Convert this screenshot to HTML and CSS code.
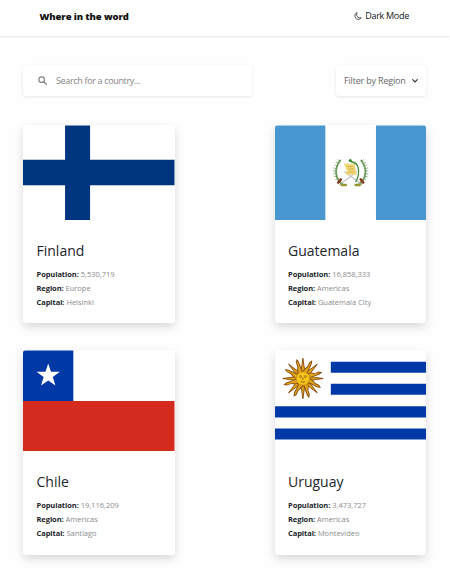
FILE: index.html
```html
<!DOCTYPE html>
<html lang="en">
<head>
<meta charset="utf-8">
<title>Where in the word</title>
<link rel="stylesheet" href="styles.css">
</head>
<body>
<header class="header">
  <h1 class="brand">Where in the word</h1>
  <div class="mode">
    <svg class="moon" viewBox="0 0 16 16"><path d="M6.2 1.2A7 7 0 1 0 14.6 11.500A7 7 0 0 1 6.200 1.200Z" fill="none" stroke="#222" stroke-width="1.500" stroke-linejoin="round"/></svg>
    <span>Dark Mode</span>
  </div>
</header>
<main class="main">
  <div class="controls">
    <div class="search">
      <svg class="glass" viewBox="0 0 16 16"><circle cx="6.500" cy="6.500" r="5" fill="none" stroke="#858585" stroke-width="2.200"/><path d="M10.300 10.300L14.800 14.800" stroke="#858585" stroke-width="2.600" stroke-linecap="round"/></svg>
      <span>Search for a country...</span>
    </div>
    <div class="filter">
      <span>Filter by Region</span>
      <svg class="chevron" viewBox="0 0 6 4"><path d="M.7.700L3 3L5.300.700" fill="none" stroke="#333" stroke-width="1.200" stroke-linecap="round"/></svg>
    </div>
  </div>
  <div class="grid">
    <article class="card">
      <svg class="flag" viewBox="0 0 152 95" preserveAspectRatio="none"><path fill="#fff" d="M0 0H152V95H0z"/><path fill="#003580" d="M42.200.500H67.300V95H42.200zM0 34.700H152V60.300H0z"/></svg>
      <div class="info">
        <h2 class="name">Finland</h2>
        <p><b>Population:</b> <span>5,530,719</span></p>
        <p><b>Region:</b> <span>Europe</span></p>
        <p><b>Capital:</b> <span>Helsinki</span></p>
      </div>
    </article>
    <article class="card">
      <svg class="flag" viewBox="0 0 152 95" preserveAspectRatio="none">
        <path fill="#fff" d="M0 0H152V95H0z"/><path fill="#4997d0" d="M0 .5H50.500V95H0zM101.300.500H152V95H101.300z"/>
        <g fill="none" stroke-linecap="round">
          <path d="M64.500 35.500C58 43 58.500 53.500 67.500 59.500M87.500 35.500C94 43 93.500 53.500 84.500 59.500" stroke="#6f9c62" stroke-width="3.800" stroke-dasharray=".6 2.200" stroke-linecap="butt"/>
          <path d="M65.500 35.500C59.500 43 59.500 53 68 59.500M86.500 35.500C92.500 43 92.500 53 84 59.500" stroke="#6c9a58" stroke-width="1.800"/>
          <path d="M67 58L82 47M85 58L70 47" stroke="#c3c5c7" stroke-width="1.300"/>
          <path d="M63.500 57.500L66 54.500M88.500 57.500L86 54.500" stroke="#873b22" stroke-width="2.600"/>
          <path d="M67 60h4M81 60h4" stroke="#96982f" stroke-width="2.600"/>
        </g>
        <path d="M69 38.500L80 39L82 50L71 49.500L72 45z" fill="#f1d675"/>
        <path d="M73 41.500h5M74 44h5M74 47h5" stroke="#c6a34b" stroke-width=".7"/>
        <path d="M76 36.500Q83 38 83.500 43Q85 50 81 57" fill="none" stroke="#448b36" stroke-width="1.300"/><circle cx="75.500" cy="35.500" r="1.500" fill="#31852e"/>
      </svg>
      <div class="info">
        <h2 class="name">Guatemala</h2>
        <p><b>Population:</b> <span>16,858,333</span></p>
        <p><b>Region:</b> <span>Americas</span></p>
        <p><b>Capital:</b> <span>Guatemala City</span></p>
      </div>
    </article>
    <article class="card">
      <svg class="flag tall" viewBox="0 0 152 101" preserveAspectRatio="none"><path fill="#fff" d="M0 0H152V101H0z"/><path fill="#0039a6" d="M0 .5H50.500V51H0z"/><path fill="#d52b1e" d="M0 50.900H152V101H0z"/><path fill="#fff" d="M25.300 13.500L28.100 21.700L37 21.800L29.900 27.100L32.500 35.500L25.300 30.500L18.100 35.500L20.700 27.100L13.600 21.800L22.500 21.700z"/></svg>
      <div class="info">
        <h2 class="name">Chile</h2>
        <p><b>Population:</b> <span>19,116,209</span></p>
        <p><b>Region:</b> <span>Americas</span></p>
        <p><b>Capital:</b> <span>Santiago</span></p>
      </div>
    </article>
    <article class="card">
      <svg class="flag tall" viewBox="0 0 152 101" preserveAspectRatio="none">
        <path fill="#fff" d="M0 0H152V101H0z"/><path fill="#0038a8" d="M56 11.700H152V22.700H56zM56 33.800H152V44.800H56zM0 56.200H152V67.500H0zM0 78.500H152V89.500H0z"/>
        <defs>
          <path id="ray" d="M-2.200-5L0-20.300L2.200-5z"/>
          <path id="wave" d="M-2.400-5C-4-9 1-12 0-15Q-.5-17 1.500-19.500C4-14 0-11 2.600-5z"/>
        </defs>
        <g transform="translate(28 28.500)">
          <g fill="#dfa51c" stroke="#84480d" stroke-width=".9">
            <use href="#ray"/><use href="#ray" transform="rotate(45)"/><use href="#ray" transform="rotate(90)"/><use href="#ray" transform="rotate(135)"/><use href="#ray" transform="rotate(180)"/><use href="#ray" transform="rotate(225)"/><use href="#ray" transform="rotate(270)"/><use href="#ray" transform="rotate(315)"/>
            <use href="#wave" transform="rotate(22.500)"/><use href="#wave" transform="rotate(67.500)"/><use href="#wave" transform="rotate(112.500)"/><use href="#wave" transform="rotate(157.500)"/><use href="#wave" transform="rotate(202.500)"/><use href="#wave" transform="rotate(247.500)"/><use href="#wave" transform="rotate(292.500)"/><use href="#wave" transform="rotate(337.500)"/>
          </g>
          <circle r="6.800" fill="#f5c51c" stroke="#b8790f" stroke-width=".6"/>
          <path d="M-4-2Q-2.500-3.500-1-2M1-2Q2.500-3.500 4-2M-3-1h1.500M1.500-1h1.500M0-1V1.500M-2.200 3.200Q0 4.200 2.200 3.200" fill="none" stroke="#80500d" stroke-width=".8"/>
        </g>
      </svg>
      <div class="info">
        <h2 class="name">Uruguay</h2>
        <p><b>Population:</b> <span>3,473,727</span></p>
        <p><b>Region:</b> <span>Americas</span></p>
        <p><b>Capital:</b> <span>Montevideo</span></p>
      </div>
    </article>
  </div>
</main>
</body>
</html>
```
FILE: styles.css
```css
* { box-sizing: border-box; }
body {
  margin: 0;
  height: 573px;
  overflow: hidden;
  background: #fefefe;
  color: #212529;
  font-family: "Open Sans", "Noto Sans", sans-serif;
}
svg { display: block; flex: none; }
h1, h2, p { margin: 0; }
.header {
  display: flex;
  justify-content: space-between;
  height: 36px;
  padding: 0 41px 0 39.500px;
  background: #fff;
  box-shadow: 0 1px 2px rgba(0, 0, 0, .1);
  white-space: nowrap;
}
.brand {
  padding-top: 9px;
  color: #111;
  font-size: 9.5px;
  font-weight: 800;
  line-height: 15px;
  letter-spacing: -.11px;
}
.mode {
  display: flex;
  gap: 3px;
  padding-top: 8px;
  color: #111517;
  font-size: 9px;
  line-height: 15px;
  letter-spacing: -.28px;
}
.moon { width: 8px; height: 8px; margin-top: 4px; }
.main { padding: 29px 24px 0 23px; }
.controls {
  display: flex;
  justify-content: space-between;
  height: 31px;
  color: #858585;
  font-size: 9px;
  white-space: nowrap;
}
.search, .filter {
  display: flex;
  align-items: center;
  background: #fff;
  border-radius: 3px;
  box-shadow: 0 1px 3px rgba(0, 0, 0, .1);
}
.search { width: 229px; padding-left: 15px; gap: 9px; letter-spacing: -.34px; }
.glass { width: 9px; height: 9px; }
.filter { width: 90px; padding: 0 8px; justify-content: space-between; color: #666; letter-spacing: -.18px; }
.chevron { width: 6px; height: 4px; }
.grid {
  display: grid;
  grid-template-columns: 151.500px 151.500px;
  justify-content: space-between;
  row-gap: 27px;
  margin-top: 29px;
}
.card {
  overflow: hidden;
  background: #fff;
  border-radius: 3px;
  box-shadow: 0 4px 10px rgba(0, 0, 0, .15);
}
.flag { width: 100%; height: 95px; }
.tall { height: 101px; }
.info { height: 103px; padding: 21px 13.500px 0; }
.tall + .info { height: 104px; }
.name {
  width: max-content;
  margin-bottom: 6px;
  font-size: 14px;
  font-weight: 400;
  line-height: 20px;
}
.info p {
  font-size: 7.500px;
  line-height: 14px;
  white-space: nowrap;
}
.info b { font-weight: 700; letter-spacing: -.08px; }
.info span { color: #8b8b8b; font-weight: 400; }
```
